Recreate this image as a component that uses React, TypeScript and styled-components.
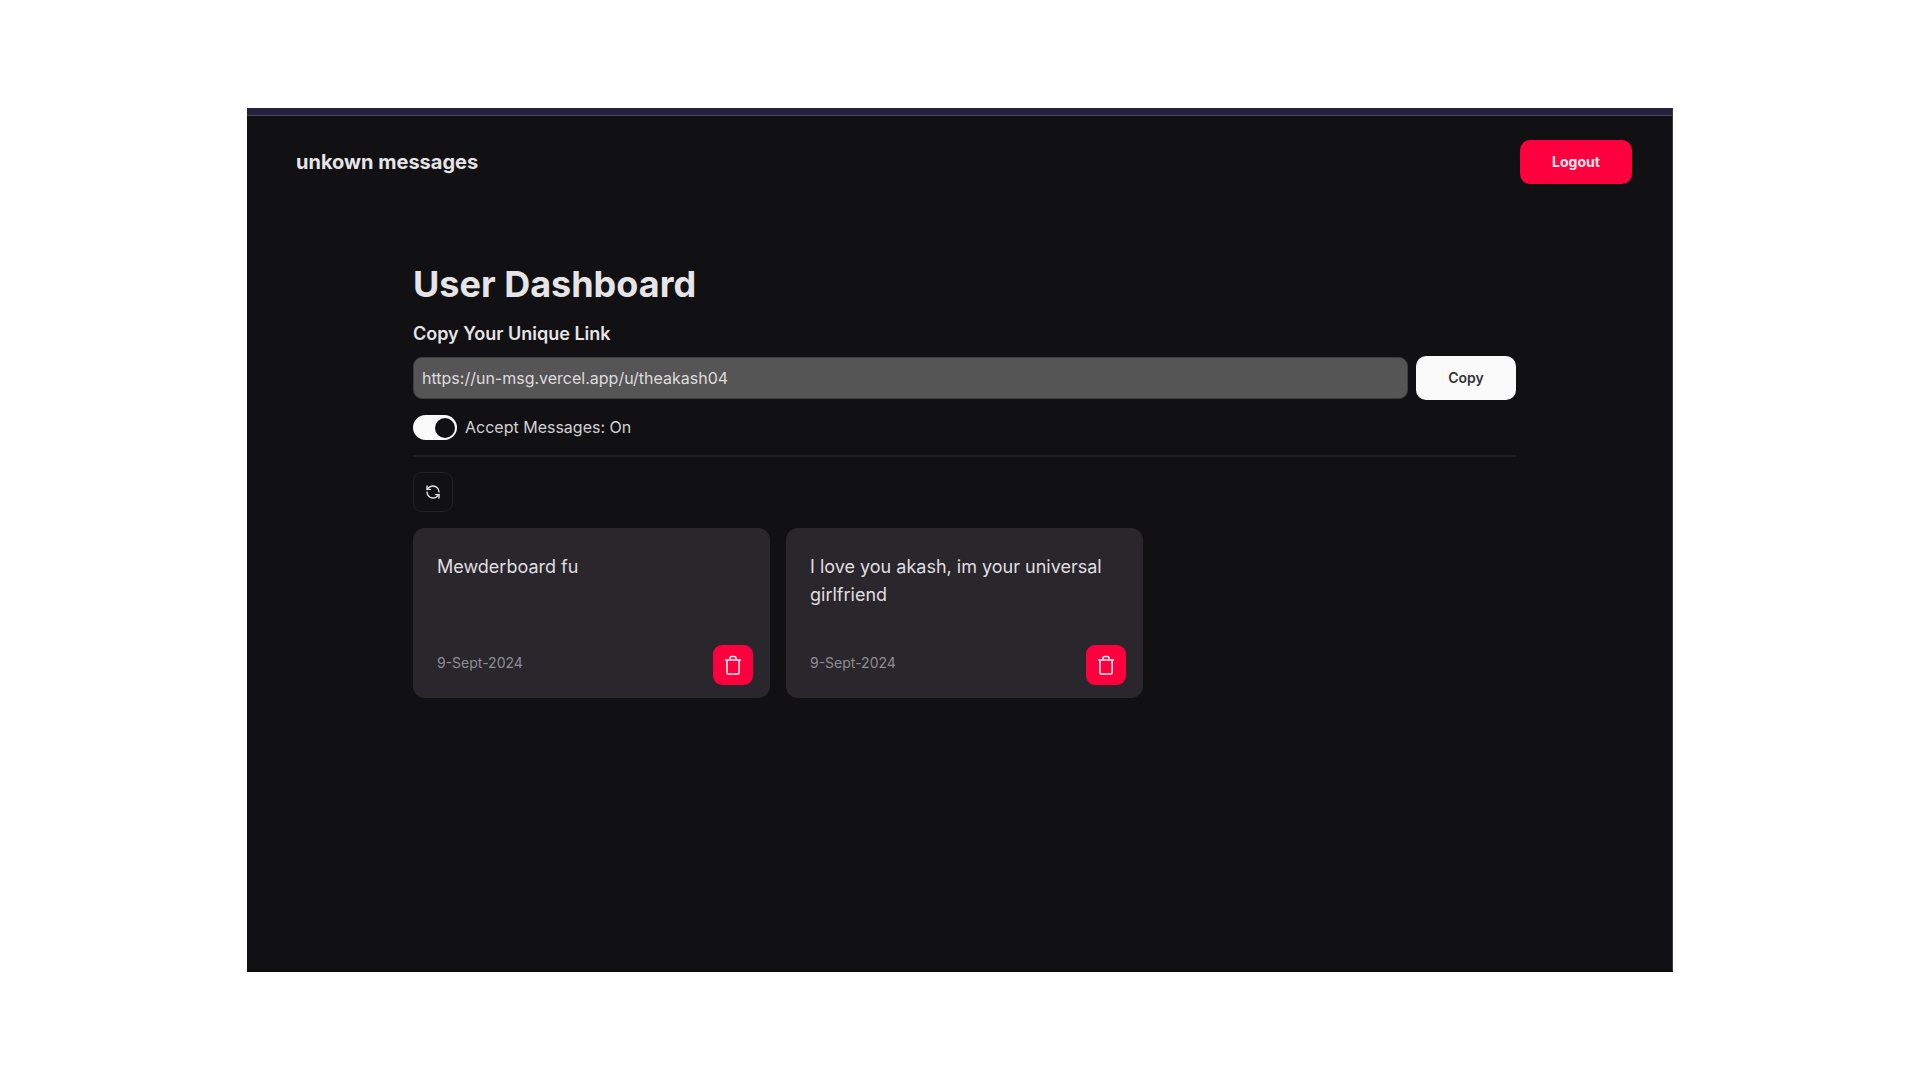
import React, { useState } from "react";
import styled, { createGlobalStyle } from "styled-components";
import { RefreshCcw } from "lucide-react";

const GlobalStyle = createGlobalStyle`
  *, *::before, *::after { box-sizing: border-box; }
  body {
    margin: 0;
    background: #ffffff;
    font-family: Inter, "Liberation Sans", sans-serif;
  }
  button, input { font: inherit; }
  h1, h2, p { margin: 0; }
`;

const Page = styled.div`
  min-height: 100vh;
  padding: 108px 247px;
  display: flex;
`;

const Screen = styled.div`
  flex: 1;
  display: flex;
  flex-direction: column;
  background: #111113;
  color: #e6e4e6;
  border-right: 1px solid #3c3c3e;
  border-bottom: 2px solid #0b0b0d;
`;

const TopStrip = styled.div`
  height: 8px;
  background: #25213b;
  border-bottom: 1px solid #49426a;
`;

const Header = styled.header`
  display: flex;
  align-items: center;
  justify-content: space-between;
  padding: 24px 40px 24px 49px;
`;

const Brand = styled.a`
  font-size: 20px;
  line-height: 28px;
  font-weight: 700;
  color: inherit;
  text-decoration: none;
`;

const Button = styled.button<{ $tone: "danger" | "light"; $width: number }>`
  width: ${(p) => p.$width}px;
  height: 44px;
  flex: none;
  border: 0;
  border-radius: 10px;
  font-size: 14px;
  line-height: 20px;
  font-weight: ${(p) => (p.$tone === "danger" ? 700 : 600)};
  cursor: pointer;
  color: ${(p) => (p.$tone === "danger" ? "#ffe9ee" : "#353537")};
  background: ${(p) => (p.$tone === "danger" ? "#ff003f" : "#fafafa")};
`;

const Main = styled.main`
  display: flex;
  flex-direction: column;
  padding: 56px 156px 40px 166px;
`;

const Title = styled.h1`
  font-size: 36px;
  line-height: 40px;
  font-weight: 700;
  margin-bottom: 16px;
`;

const LinkLabel = styled.label`
  font-size: 18px;
  line-height: 28px;
  font-weight: 600;
  margin-bottom: 8px;
`;

const LinkRow = styled.div`
  display: flex;
  align-items: center;
  gap: 8px;
  margin-bottom: 15px;
`;

const LinkInput = styled.input`
  flex: 1;
  min-width: 0;
  height: 42px;
  padding: 0 8px;
  border: 1px solid #3e3e40;
  border-radius: 9px;
  background: #555555;
  color: #dcdcdc;
  font-size: 16px;
  line-height: 24px;
  outline: none;
`;

const SwitchRow = styled.label`
  display: flex;
  align-items: center;
  align-self: flex-start;
  gap: 8px;
  font-size: 16px;
  line-height: 25px;
  color: #d2d1d3;
  cursor: pointer;
`;

const Switch = styled.input`
  appearance: none;
  display: flex;
  align-items: center;
  width: 44px;
  height: 25px;
  margin: 0;
  padding: 0 2px;
  border-radius: 13px;
  background: #3a3a3e;
  cursor: pointer;

  &::before {
    content: "";
    width: 20px;
    height: 20px;
    border-radius: 50%;
    background: #111113;
  }

  &:checked {
    background: #fafafa;
    justify-content: flex-end;
  }
`;

const Divider = styled.hr`
  width: 100%;
  height: 2px;
  margin: 15px 0;
  border: 0;
  background: #1f1f22;
`;

const IconButton = styled.button<{ $danger?: boolean }>`
  display: flex;
  align-items: center;
  justify-content: center;
  flex: none;
  width: 40px;
  height: 40px;
  padding: 0;
  border-radius: 9px;
  cursor: pointer;
  border: ${(p) => (p.$danger ? "0" : "1px solid #232326")};
  background: ${(p) => (p.$danger ? "#ff003f" : "transparent")};
  color: ${(p) => (p.$danger ? "#ffe9ee" : "#e6e4e6")};
`;

const Cards = styled.div`
  display: grid;
  grid-template-columns: repeat(3, 1fr);
  gap: 16px;
  margin-top: 16px;
`;

const Card = styled.article`
  display: flex;
  flex-direction: column;
  justify-content: space-between;
  min-height: 170px;
  padding: 25px 17px 13px 24px;
  border-radius: 12px;
  background: #29272b;
`;

const Message = styled.p`
  font-size: 18px;
  line-height: 28px;
  color: #e0dee1;
`;

const CardFooter = styled.div`
  display: flex;
  align-items: flex-start;
  justify-content: space-between;
`;

const DateText = styled.time`
  font-size: 14px;
  line-height: 36px;
  color: #8f8d93;
`;

const TrashIcon = () => (
  <svg width="20" height="20" viewBox="0 0 20 20" fill="none" stroke="currentColor" strokeWidth="1.6" strokeLinecap="round" strokeLinejoin="round" aria-hidden="true">
    <path d="M2.600 5H17.400M3.900 5V17.800Q3.900 19 5.100 19H14.900Q16.100 19 16.100 17.800V5M6.900 5V3.400Q6.900 1.500 8.800 1.500H11.200Q13.100 1.500 13.100 3.400V5" />
  </svg>
);

const messages = [
  { text: "Mewderboard fu", date: "9-Sept-2024" },
  { text: "I love you akash, im your universal girlfriend", date: "9-Sept-2024" },
];

export default function App() {
  const [accepting, setAccepting] = useState(true);
  return (
    <Page>
      <GlobalStyle />
      <Screen>
        <TopStrip />
        <Header>
          <Brand href="#">unkown messages</Brand>
          <Button type="button" $tone="danger" $width={112}>Logout</Button>
        </Header>
        <Main>
          <Title>User Dashboard</Title>
          <LinkLabel htmlFor="unique-link">Copy Your Unique Link</LinkLabel>
          <LinkRow>
            <LinkInput id="unique-link" type="text" readOnly value="https://un-msg.vercel.app/u/theakash04" />
            <Button type="button" $tone="light" $width={100}>Copy</Button>
          </LinkRow>
          <SwitchRow>
            <Switch type="checkbox" role="switch" checked={accepting} onChange={(e) => setAccepting(e.target.checked)} />
            <span>Accept Messages: {accepting ? "On" : "Off"}</span>
          </SwitchRow>
          <Divider />
          <IconButton type="button" aria-label="Refresh messages">
            <RefreshCcw size={16} />
          </IconButton>
          <Cards>
            {messages.map((m) => (
              <Card key={m.text}>
                <Message>{m.text}</Message>
                <CardFooter>
                  <DateText>{m.date}</DateText>
                  <IconButton type="button" $danger aria-label="Delete message">
                    <TrashIcon />
                  </IconButton>
                </CardFooter>
              </Card>
            ))}
          </Cards>
        </Main>
      </Screen>
    </Page>
  );
}
